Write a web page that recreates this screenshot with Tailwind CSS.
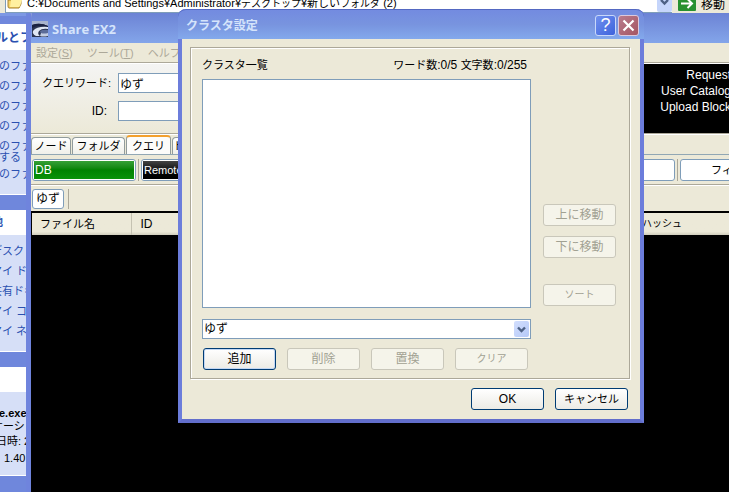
<!DOCTYPE html>
<html lang="ja">
<head>
<meta charset="utf-8">
<meta name="viewport" content="width=device-width, initial-scale=1">
<title>Share EX2</title>
<script src="https://cdn.jsdelivr.net/npm/@tailwindcss/browser@4"></script>
</head>
<body class="relative h-screen overflow-hidden bg-[#6f87dc] font-['Liberation_Sans','Noto_Sans_CJK_JP',sans-serif] text-[12px] leading-4 text-black whitespace-nowrap">

<!-- Explorer -->
<header class="flex h-[13px] items-end overflow-hidden bg-[#ece9d8]">
  <div class="ml-[5px] flex h-[13px] flex-1 items-end border-b border-l border-[#7f9db9] bg-white">
    <svg class="h-3 w-[18px]" viewBox="0 0 18 12"><path d="M2 0h13v4l-2 4H3Q2 8 2 6Z" fill="#f7d468" stroke="#a4802c"/><path d="M5 0h11l-2 6-1 1H4Z" fill="#fff0a0"/></svg>
    <span class="ml-[3px] text-[11px] leading-4">C:¥Documents and Settings¥Administrator¥<span class="text-[10px]">デスクトップ</span>¥新しい<span class="text-[10px]">フォルダ</span> (2)</span>
    <span class="ml-auto flex h-3 w-[15px] items-start justify-center rounded-b-xs bg-[#c5d5fb]"><svg class="h-[7px] w-[9px]" viewBox="0 0 9 7"><path d="M1 0l3.500 3.500L8 0" fill="none" stroke="#4d6185" stroke-width="2.400"/></svg></span>
  </div>
  <button class="flex w-[57px] items-end text-left">
    <svg class="mr-[5px] ml-[6px] h-[13px] w-[18px]" viewBox="0 0 18 13"><path d="M0 0h18v10q0 1-1 1H1q-1 0-1-1Z" fill="#27912f"/><path d="M3 3.500h11M9.500 -1l4.500 4.500-4.500 4.500" fill="none" stroke="#fff" stroke-width="2"/></svg>
    <span class="leading-4">移動</span>
  </button>
</header>
<aside class="w-[26px] overflow-hidden border-t-[3px] border-[#7d98e4] text-[11px] leading-5 text-[#2a50b0]">
  <section class="mt-2">
    <h2 class="h-[26px] bg-white text-[12px] leading-7 font-bold -indent-1">ルとフォ</h2>
    <div class="h-[145px] border-b border-white bg-[#d6dff7] pt-[6px] -indent-px">
      <p>のファ</p><p>のファ</p><p>のファ</p><p>のファ</p><p class="h-[14px]">のファ</p><p class="h-[14px] leading-[14px]">する</p><p>のファ</p>
    </div>
  </section>
  <section class="mt-[15px]">
    <h2 class="h-[25px] bg-white font-bold leading-[25px] -indent-2">他</h2>
    <div class="h-[117px] border-b border-white bg-[#d6dff7] pt-[6px] -indent-[9px]">
      <p>デスクト</p><p>マイ ドキ</p><p>共有ドキ</p><p>マイ コン</p><p>マイ ネッ</p>
    </div>
  </section>
  <section class="mt-[15px] text-black">
    <h2 class="h-[25px] bg-white"></h2>
    <div class="h-[84px] border-b border-white bg-[#d6dff7] pt-[13px]">
      <p class="text-[11px] leading-4 font-bold -indent-px">e.exe</p>
      <p class="h-[11px] leading-[10px] -indent-2">ケーショ</p>
      <p class="leading-[18px] -indent-1">日時: 2</p>
      <p class="pl-1 text-[11px] leading-4">1.40</p>
    </div>
  </section>
</aside>

<!-- Share EX2 window -->
<main class="absolute top-[13px] right-0 bottom-0 left-[26px] flex flex-col overflow-hidden rounded-tl-md border-l-[5px] border-[#6f84dd] bg-[#ece9d8]">
  <div class="-ml-[5px] flex h-[30px] shrink-0 items-center rounded-tl-md bg-linear-to-b from-[#6c83d5] via-[#7894df] to-[#83a5ea] pl-[6px]">
    <svg class="mt-[2px] h-4 w-4" viewBox="0 0 16 16"><rect width="16" height="16" fill="#2b3450"/><path d="M0 0H16V5Q8 1 0 4Z" fill="#a9b4cc"/><path d="M0 4Q8 1 16 5V6Q8 3 0 7Z" fill="#1a2140"/><path d="M1 10Q5 5 16 6V8Q10 7 7 10 5 13 8 15H4Q0 13 1 10Z" fill="#dfe6f2"/><path d="M8 10Q11 8 16 9V14Q12 15 9 13Z" fill="#5c6c98"/><path d="M9 12q3 1 7 0v3q-5 1-8 0Z" fill="#c3cde2"/></svg>
    <h1 class="mt-[2px] ml-1 font-['Open_Sans',sans-serif] text-[13px] font-bold text-[#d5e4fb]">Share EX2</h1>
  </div>
  <nav class="flex h-[20px] shrink-0 items-center gap-[14px] border-b border-[#aca899] pl-[5px] text-[11px] text-[#aca899]">
    <button class="h-4 leading-4">設定(<u>S</u>)</button><button class="h-4 leading-4">ツール(<u>T</u>)</button><button class="h-4 leading-4">ヘルプ</button>
  </nav>
  <section class="flex h-[71px] shrink-0 border-y border-t-white border-b-[#aca899] bg-linear-to-b from-[#f4f4f3] to-[#ece9d8]">
    <div class="grid flex-1 grid-cols-[80px_140px] content-start items-center gap-x-[7px] gap-y-2 pt-[9px]">
      <label for="word" class="text-right text-[11px]">クエリワード:</label><input id="word" value="ゆず" class="h-5 border border-[#7f9db9] bg-white px-px">
      <label for="id" class="pr-1 text-right">ID:</label><input id="id" class="h-5 border border-[#7f9db9] bg-white px-px">
    </div>
    <div class="w-[120px] bg-black pt-[3px] text-right text-[12px] text-white">
      <div class="-mr-[2px]"><p>Request</p><p>User Catalog</p><p>Upload Block</p></div>
    </div>
  </section>
  <div class="flex h-[21px] shrink-0 items-end gap-px border-t border-b border-t-white border-b-[#91a7b4] text-[11px]" role="tablist">
    <button role="tab" class="h-[17px] w-[40px] rounded-t-sm border border-b-0 border-[#919b9c] bg-linear-to-b from-white to-[#f0f0ea] leading-4">ノード</button>
    <button role="tab" class="h-[17px] w-[53px] rounded-t-sm border border-b-0 border-[#919b9c] bg-linear-to-b from-white to-[#f0f0ea] leading-4">フォルダ</button>
    <button role="tab" aria-selected="true" class="h-[19px] w-[45px] rounded-t-sm border border-t-2 border-b-0 border-[#919b9c] border-t-[#f3a02d] bg-[#fcfcfa] leading-4">クエリ</button>
    <button role="tab" class="h-[17px] w-[53px] overflow-hidden rounded-t-sm border border-b-0 border-[#919b9c] bg-linear-to-b from-white to-[#f0f0ea] text-left leading-4">ト</button>
  </div>
  <div class="flex h-[30px] shrink-0 items-center border-b border-[#aca899] px-px">
    <button class="h-[22px] w-[104px] rounded-[3px] border border-[#7f9db9] bg-white p-px text-left text-white"><span class="block h-[18px] bg-linear-to-b from-[#35a035] via-[#008200] to-[#0a930a] pl-px leading-[18px]">DB</span></button>
    <i class="mx-[2px] h-[22px] w-px bg-[#aca899]"></i>
    <button class="h-[22px] w-[104px] rounded-[3px] border border-[#7f9db9] bg-white p-px text-left text-white"><span class="block h-[18px] bg-linear-to-b from-[#444] to-black pl-px text-[11px] leading-[18px]">Remote</span></button>
    <i class="mx-[2px] h-[22px] w-px bg-[#aca899]"></i>
    <button aria-label="状態" class="h-[22px] flex-1 rounded-[3px] border border-[#7f9db9] bg-white"></button>
    <i class="mx-[2px] h-[22px] w-px bg-[#aca899]"></i>
    <button class="-mr-[5px] h-[22px] w-[53px] rounded-l-[3px] border border-[#7f9db9] bg-white pl-[30px] text-left text-[11px]">フィ</button>
  </div>
  <div class="flex h-[26px] shrink-0 items-center gap-1 border-t border-white px-px">
    <button class="h-5 w-[32px] rounded-[3px] border border-[#7f9db9] bg-white leading-[18px]">ゆず</button>
    <i class="h-5 w-px bg-[#aca899]"></i>
  </div>
  <div class="flex-1 border-t-2 border-l border-black bg-black">
    <table class="w-full table-fixed border-collapse bg-linear-to-b from-[#ece9d8] from-85% to-[#d0cdbd] text-left text-[11px]">
      <thead><tr class="h-[22px]">
        <th class="w-[99px] border-r border-[#c5c2b2] p-0 pl-2 font-normal">ファイル名</th>
        <th class="p-0 pl-[9px] text-[12px] font-normal">ID</th>
        <th class="w-[87px] p-0 text-[10px] font-normal">ハッシュ</th>
      </tr></thead>
    </table>
  </div>
</main>

<!-- Cluster settings dialog -->
<section role="dialog" aria-labelledby="dlg" class="absolute top-[9px] left-[178px] w-[466px] rounded-t-lg border-x-4 border-b-4 border-x-[#6c7ddb] border-b-[#626ecb] bg-[#ece9d8]">
  <div class="-mx-1 flex h-[30px] items-center gap-[2px] rounded-t-lg border-t border-[#5368c2] bg-linear-to-b from-[#738be0] via-[#7894df] to-[#83a9ec] pr-[5px] pl-2">
    <h2 id="dlg" class="mt-[2px] flex-1 text-[12px] font-bold text-[#d5e4fb]">クラスタ設定</h2>
    <button aria-label="ヘルプ" class="mt-px flex size-[21px] items-center justify-center rounded-[3px] border border-[#c8d8fa] bg-linear-to-br from-[#7190ee] to-[#3d62dc] text-[18px] leading-4 text-white">?</button>
    <button aria-label="閉じる" class="mt-px flex size-[21px] items-center justify-center rounded-[3px] border border-[#dcc9dc] bg-linear-to-br from-[#b87c8e] to-[#a55562]"><svg class="size-[13px]" viewBox="0 0 13 13"><path d="M1.500 1.500l10 10M11.500 1.500l-10 10" stroke="#fff" stroke-width="2.200"/></svg></button>
  </div>
  <div class="mt-2 mr-[10px] ml-2 flex gap-3 border border-[#aca899] px-[11px] pt-[9px] pb-2 shadow-[1px_1px_0_#fff,inset_1px_1px_0_#fff]">
    <div class="flex-1">
      <div class="flex h-[22px] justify-between pr-1">
        <label for="list" class="text-[11px]">クラスタ一覧</label>
        <p><span class="text-[11px]">ワード数</span>:0/5 <span class="text-[11px]">文字数</span>:0/255</p>
      </div>
      <select id="list" size="10" class="block h-[229px] w-full border border-[#7f9db9] bg-white"></select>
      <div class="relative mt-[11px]">
        <select aria-label="クラスタ" class="block h-5 w-full appearance-none border border-[#7f9db9] bg-white pl-px text-[12px] leading-4"><option>ゆず</option></select>
        <span class="pointer-events-none absolute top-[2px] right-[2px] flex h-4 w-[15px] items-center justify-center rounded-[2px] bg-linear-to-br from-[#d2defd] to-[#b5c9f8]"><svg class="h-[7px] w-[9px]" viewBox="0 0 9 7"><path d="M1 1.500l3.500 3.500L8 1.500" fill="none" stroke="#4d6185" stroke-width="2.400"/></svg></span>
      </div>
      <div class="mt-[9px] flex gap-[11px] pl-px">
        <button class="h-[22px] w-[73px] rounded-[3px] border border-[#003c74] bg-linear-to-b from-white to-[#ecebe5] text-[12px] shadow-[inset_0_0_0_1px_#c3d7f3]">追加</button>
        <button disabled class="h-[22px] w-[73px] rounded-[3px] border border-[#c9c7ba] bg-[#f5f4ea] text-[#a1a192]">削除</button>
        <button disabled class="h-[22px] w-[73px] rounded-[3px] border border-[#c9c7ba] bg-[#f5f4ea] text-[#a1a192]">置換</button>
        <button disabled class="h-[22px] w-[73px] rounded-[3px] border border-[#c9c7ba] bg-[#f5f4ea] text-[10px] text-[#a1a192]">クリア</button>
      </div>
    </div>
    <div class="mr-[2px] flex w-[73px] flex-col gap-[10px] pt-[147px]">
      <button disabled class="h-[22px] rounded-[3px] border border-[#c9c7ba] bg-[#f5f4ea] text-[12px] text-[#a1a192]">上に移動</button>
      <button disabled class="h-[22px] rounded-[3px] border border-[#c9c7ba] bg-[#f5f4ea] text-[12px] text-[#a1a192]">下に移動</button>
      <button disabled class="mt-4 h-[22px] rounded-[3px] border border-[#c9c7ba] bg-[#f5f4ea] text-[10px] text-[#a1a192]">ソート</button>
    </div>
  </div>
  <div class="flex justify-end gap-[11px] pt-[9px] pr-3 pb-[9px]">
    <button class="h-[22px] w-[73px] rounded-[3px] border border-[#003c74] bg-linear-to-b from-white to-[#ecebe5] text-[12px]">OK</button>
    <button class="h-[22px] w-[73px] rounded-[3px] border border-[#003c74] bg-linear-to-b from-white to-[#ecebe5] text-[11px]">キャンセル</button>
  </div>
</section>
</body>
</html>
